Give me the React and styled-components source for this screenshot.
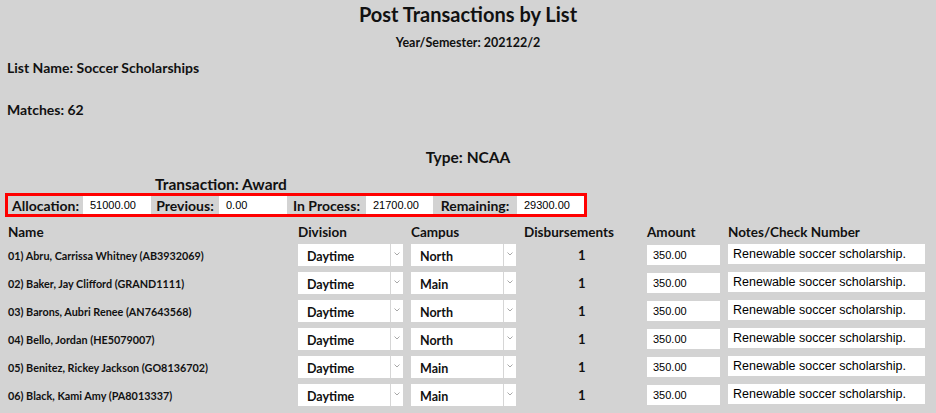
import React from 'react';
import styled, { createGlobalStyle } from 'styled-components';

const GlobalStyle = createGlobalStyle`
    html, body {
        margin: 0;
        padding: 0;
        background: #d3d3d3;
    }
    body {
        font-family: "Century Gothic", Lato, "Open Sans", sans-serif;
        font-weight: 700;
        color: #111;
    }
`;

const Page = styled.div`
    width: 936px;
    height: 413px;
    overflow: hidden;
`;

const Title = styled.h1`
    margin: 0;
    text-align: center;
    font-size: 20px;
    line-height: 28px;
    font-weight: 700;
`;

const InfoLine = styled.div`
    margin-top: ${p => p.$gap}px;
    padding-left: ${p => p.$indent || 0}px;
    text-align: ${p => (p.$center ? 'center' : 'left')};
    font-size: ${p => p.$size || 14}px;
    line-height: 18px;
`;

const TotalsBox = styled.div`
    display: flex;
    width: 576px;
    margin-left: 5px;
    border: 3px solid #ff0000;
`;

const TotalLabel = styled.div`
    width: ${p => p.$w}px;
    height: 18px;
    display: flex;
    align-items: center;
    justify-content: center;
    font-size: 14px;
`;

const TotalValue = styled.div`
    width: ${p => p.$w}px;
    height: 18px;
    box-sizing: border-box;
    padding-left: 7px;
    display: flex;
    align-items: center;
    background: #fff;
    font-family: "Liberation Sans", Arial, sans-serif;
    font-weight: 400;
    font-size: 11px;
    color: #000;
`;

const Grid = styled.div`
    display: grid;
    grid-template-columns: 290px 113px 113px 123px 81px 200px;
    padding-left: 8px;
    margin-top: 6px;
`;

const HeadCell = styled.div`
    height: 18px;
    line-height: 18px;
    font-size: 13.5px;
`;

const Cell = styled.div`
    height: 28px;
    display: flex;
    align-items: ${p => (p.$top ? 'flex-start' : 'center')};
    padding-top: ${p => (p.$top ? 3 : 0)}px;
    box-sizing: border-box;
`;

const NameText = styled.span`
    font-size: 10.8px;
`;

const SelectBox = styled.div`
    display: flex;
    width: 105px;
    height: 22px;
    background: #fff;
`;

const SelectText = styled.div`
    flex: 1;
    display: flex;
    align-items: center;
    padding-left: 9px;
    padding-top: 2px;
    font-size: 12.5px;
    border-right: 1px solid #d6d6d6;
`;

const SelectArrow = styled.div`
    width: 12px;
    display: flex;
    align-items: center;
    justify-content: center;
    padding-bottom: 3px;
`;

const Count = styled.div`
    padding-left: 54px;
    font-size: 13px;
`;

const TextInput = styled.div`
    width: ${p => p.$w}px;
    height: 20px;
    box-sizing: border-box;
    padding-left: ${p => p.$pad}px;
    display: flex;
    align-items: center;
    background: #fff;
    font-family: "Liberation Sans", Arial, sans-serif;
    font-weight: 400;
    font-size: ${p => p.$size}px;
    color: #000;
`;

const Chevron = () => (
    <svg width="6" height="4" viewBox="0 0 6 4">
        <path d="M0.5 0.5 L3 3 L5.5 0.5" fill="none" stroke="#a8a8a8" strokeWidth="1" />
    </svg>
);

const Select = ({ value }) => (
    <SelectBox>
        <SelectText>{value}</SelectText>
        <SelectArrow><Chevron /></SelectArrow>
    </SelectBox>
);

const rows = [
    { name: '01) Abru, Carrissa Whitney (AB3932069)', campus: 'North' },
    { name: '02) Baker, Jay Clifford (GRAND1111)', campus: 'Main' },
    { name: '03) Barons, Aubri Renee (AN7643568)', campus: 'North' },
    { name: '04) Bello, Jordan (HE5079007)', campus: 'North' },
    { name: '05) Benitez, Rickey Jackson (GO8136702)', campus: 'Main' },
    { name: '06) Black, Kami Amy (PA8013337)', campus: 'Main' },
];

export default function App() {
    return (
        <Page>
            <GlobalStyle />
            <Title>Post Transactions by List</Title>
            <InfoLine $center $gap={6} $size={12.5}>Year/Semester: 202122/2</InfoLine>
            <InfoLine $gap={7} $indent={7}>List Name: Soccer Scholarships</InfoLine>
            <InfoLine $gap={24} $indent={7}>Matches: 62</InfoLine>
            <InfoLine $center $gap={29} $size={15.5}>Type: NCAA</InfoLine>
            <InfoLine $gap={9} $indent={155} $size={15.5}>Transaction: Award</InfoLine>
            <TotalsBox>
                <TotalLabel $w={75}>Allocation:</TotalLabel>
                <TotalValue $w={68}>51000.00</TotalValue>
                <TotalLabel $w={68}>Previous:</TotalLabel>
                <TotalValue $w={68}>0.00</TotalValue>
                <TotalLabel $w={79}>In Process:</TotalLabel>
                <TotalValue $w={67}>21700.00</TotalValue>
                <TotalLabel $w={84}>Remaining:</TotalLabel>
                <TotalValue $w={67}>29300.00</TotalValue>
            </TotalsBox>
            <Grid>
                <HeadCell>Name</HeadCell>
                <HeadCell>Division</HeadCell>
                <HeadCell>Campus</HeadCell>
                <HeadCell>Disbursements</HeadCell>
                <HeadCell>Amount</HeadCell>
                <HeadCell>Notes/Check Number</HeadCell>
                {rows.map(r => (
                    <React.Fragment key={r.name}>
                        <Cell><NameText>{r.name}</NameText></Cell>
                        <Cell><Select value="Daytime" /></Cell>
                        <Cell><Select value={r.campus} /></Cell>
                        <Cell><Count>1</Count></Cell>
                        <Cell><TextInput $w={73} $pad={6} $size={11}>350.00</TextInput></Cell>
                        <Cell $top><TextInput $w={197} $pad={5} $size={12.5}>Renewable soccer scholarship.</TextInput></Cell>
                    </React.Fragment>
                ))}
            </Grid>
        </Page>
    );
}
